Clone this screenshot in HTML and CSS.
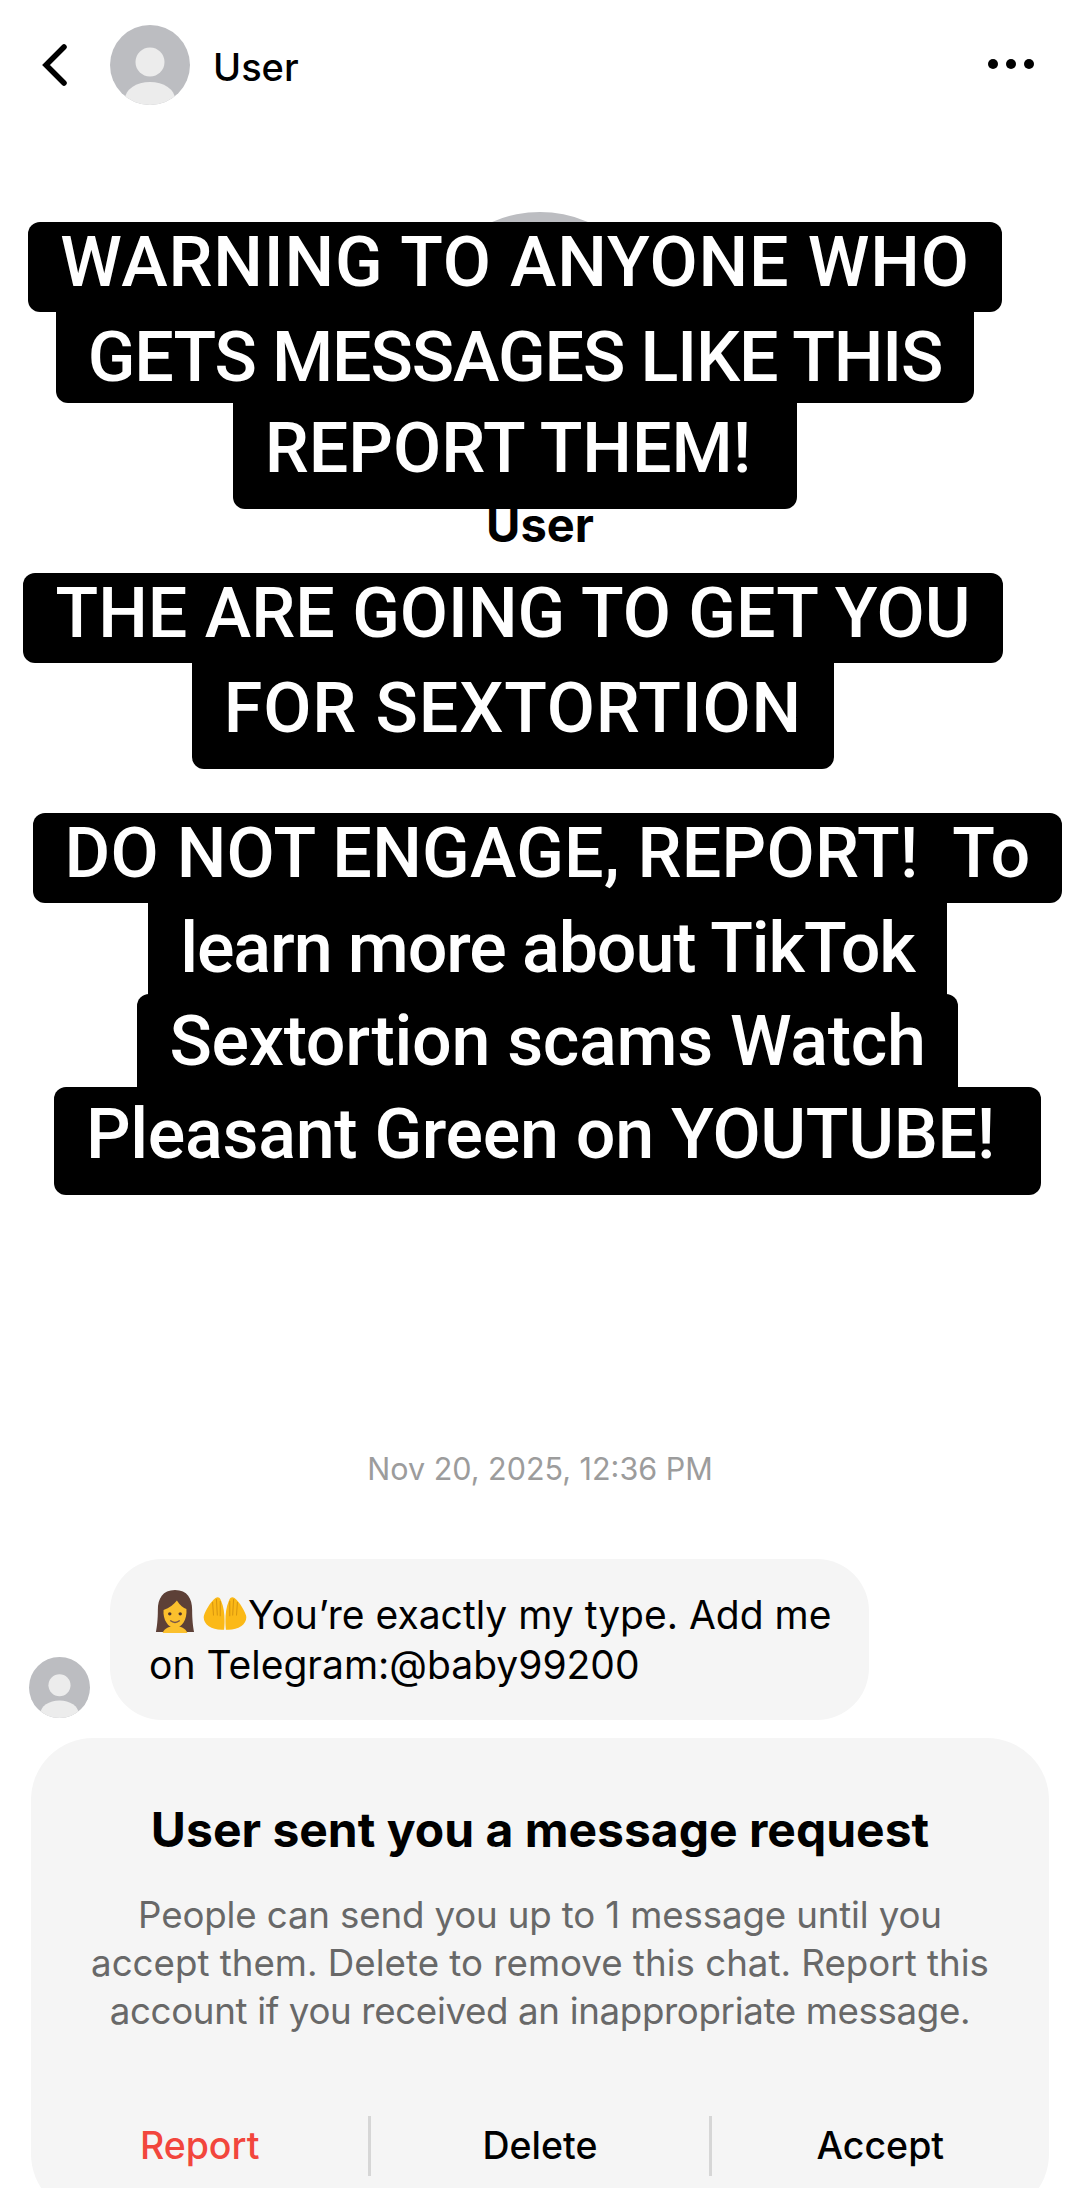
FILE: index.html
```html
<!DOCTYPE html>
<html lang="en">
  <head>
    <meta charset="UTF-8" />
    <meta name="viewport" content="width=device-width, initial-scale=1.0" />
    <title>Message request</title>
    <link rel="stylesheet" href="styles.css">
  </head>
  <body>
    <div class="page">
      <div class="topBar">
        <svg class="backIcon" viewBox="0 0 26 42" aria-hidden="true">
          <path d="M22 3 L4 21 L22 39" />
        </svg>
        <svg class="avatar avatarTop" viewBox="0 0 80 80" aria-hidden="true">
          <use href="#userPic" />
        </svg>
        <span class="topName">User</span>
        <div class="dots"><i></i><i></i><i></i></div>
      </div>

      <div class="profile">
        <svg class="avatar avatarBig" viewBox="0 0 80 80" aria-hidden="true">
          <use href="#userPic" />
        </svg>
        <div class="profileName">User</div>
      </div>

      <div class="chatDate">Nov 20, 2025, 12:36 PM</div>

      <div class="msgRow">
        <svg class="avatar avatarSmall" viewBox="0 0 80 80" aria-hidden="true">
          <use href="#userPic" />
        </svg>
        <div class="bubble">
          <p>
            <svg class="emoji" viewBox="0 0 42 46" aria-hidden="true">
              <path fill="#5d4037" d="M21 1 C8 1 3 10 3 22 C3 32 2 40 1 45 L41 45 C40 40 39 32 39 22 C39 10 34 1 21 1 Z" />
              <path fill="#fbc02d" d="M9 22 C15 20 20 16 23 12 C26 17 30 20 33 21 C34 32 28 41 21 41 C14 41 8 32 9 22 Z" />
              <path fill="#fbc02d" d="M8 46 C10 41 15 39 21 39 C27 39 32 41 34 46 Z" />
              <circle cx="15.5" cy="26" r="1.8" fill="#4e342e" />
              <circle cx="26.5" cy="26" r="1.8" fill="#4e342e" />
              <path d="M16 33 Q21 37 26 33" fill="none" stroke="#795548" stroke-width="1.5" />
            </svg><svg class="emoji emojiHands" viewBox="0 0 46 36" aria-hidden="true">
              <path fill="#fbb917" d="M15 1 C10 2 3 14 1 20 C-1 29 9 36 22 35 C23 27 23 14 19 5 C18 2 17 1 15 1 Z" />
              <path fill="#fbb917" d="M31 1 C36 2 43 14 45 20 C47 29 37 36 24 35 C23 27 23 14 27 5 C28 2 29 1 31 1 Z" />
              <path fill="none" stroke="#d8960f" stroke-width="1.1" d="M10 6 L11 20 M14 3 L15 20 M18 5 L18 21 M36 6 L35 20 M32 3 L31 20 M28 5 L28 21" />
            </svg>You’re exactly my type. Add me
          </p>
          <p>on Telegram:@baby99200</p>
        </div>
      </div>

      <div class="requestCard">
        <h2>User sent you a message request</h2>
        <p class="tightLine">People can send you up to 1 message until you</p>
        <p>accept them. Delete to remove this chat. Report this</p>
        <p class="tighterLine">account if you received an inappropriate message.</p>
        <div class="cardActions">
          <span class="reportBtn">Report</span>
          <span>Delete</span>
          <span>Accept</span>
        </div>
      </div>

      <!-- captions stuck on top of the screenshot -->
      <div class="caption captionOne">
        <span class="wide">WARNING TO ANYONE WHO</span>
        <span class="narrow">GETS MESSAGES LIKE THIS</span>
        <span class="tall tail">REPORT THEM!</span>
      </div>
      <div class="caption captionTwo">
        <span>THE ARE GOING TO GET YOU</span>
        <span class="tall wide">FOR SEXTORTION</span>
      </div>
      <div class="caption captionThree">
        <span class="loose">DO NOT ENGAGE, REPORT!&nbsp; To</span>
        <span class="narrow under">learn more about TikTok</span>
        <span class="snug under over">Sextortion scams Watch</span>
        <span class="tall tail snug over">Pleasant Green on YOUTUBE!</span>
      </div>
    </div>

    <svg class="defs" aria-hidden="true">
      <defs>
        <clipPath id="picClip"><circle cx="40" cy="40" r="40" /></clipPath>
        <g id="userPic" clip-path="url(#picClip)">
          <rect width="80" height="80" fill="#bcbdc1" />
          <circle cx="40" cy="37" r="14.5" fill="#ececec" />
          <ellipse cx="40" cy="74" rx="25" ry="17" fill="#ececec" />
        </g>
      </defs>
    </svg>
  </body>
</html>
```

FILE: styles.css
```css
html, body {
  margin: 0;
  padding: 0;
  background: #fff;
}
.page {
  position: relative;
  width: 1080px;
  height: 2188px;
  overflow: hidden;
  font-family: "Inter", "Liberation Sans", sans-serif;
  color: #000;
}
.defs {
  position: absolute;
  width: 0;
  height: 0;
}
.avatar {
  display: block;
  flex-shrink: 0;
}

/* top bar */
.topBar {
  display: flex;
  align-items: center;
  height: 80px;
  padding: 25px 46px 0 42px;
}
.backIcon {
  width: 26px;
  height: 42px;
  margin-right: 42px;
  margin-top: -1px;
}
.backIcon path {
  fill: none;
  stroke: #000;
  stroke-width: 5.5;
  stroke-linecap: round;
  stroke-linejoin: miter;
}
.avatarTop {
  width: 80px;
  height: 80px;
}
.topName {
  margin: 4px 0 0 23px;
  font-size: 38px;
  font-weight: 500;
}
.dots {
  display: flex;
  gap: 8px;
  margin-left: auto;
  margin-top: -2px;
}
.dots i {
  display: block;
  width: 10px;
  height: 10px;
  border-radius: 50%;
  background: #000;
}

/* profile block, mostly covered by the captions */
.profile {
  display: flex;
  flex-direction: column;
  align-items: center;
  margin-top: 107px;
}
.avatarBig {
  width: 240px;
  height: 240px;
}
.profileName {
  margin-top: 48px;
  font-size: 47px;
  line-height: 50px;
  font-weight: 700;
}

.chatDate {
  margin-top: 901px;
  text-align: center;
  font-size: 30.5px;
  line-height: 36px;
  color: #9c9c9c;
}

/* message */
.msgRow {
  display: flex;
  align-items: flex-end;
  margin-top: 72px;
  padding-left: 29px;
}
.avatarSmall {
  width: 61px;
  height: 61px;
  margin-bottom: 2px;
}
.bubble {
  width: 759px;
  height: 161px;
  box-sizing: border-box;
  margin-left: 20px;
  padding: 30px 0 0 39px;
  background: #f5f5f5;
  border-radius: 52px;
}
.bubble p {
  display: flex;
  align-items: center;
  height: 50px;
  margin: 0;
  font-size: 39px;
  white-space: nowrap;
}
.emoji {
  width: 40px;
  height: 44px;
  margin: -6px 6px 0 6px;
}
.emojiHands {
  width: 44px;
  height: 35px;
  margin: -2px 1px 0 2px;
}

/* request card */
.requestCard {
  width: 1018px;
  height: 478px;
  box-sizing: border-box;
  margin: 18px 0 0 31px;
  padding-top: 64px;
  background: #f5f5f5;
  border-radius: 62px;
  text-align: center;
}
.requestCard h2 {
  margin: 0 0 33px;
  font-size: 48px;
  line-height: 56px;
  font-weight: 700;
}
.requestCard p {
  margin: 0;
  font-size: 36.7px;
  line-height: 48px;
  color: #686868;
  white-space: nowrap;
}
.requestCard p.tightLine {
  letter-spacing: -0.15px;
}
.requestCard p.tighterLine {
  letter-spacing: -0.35px;
}
.cardActions {
  display: flex;
  margin-top: 81px;
  height: 60px;
  align-items: center;
  font-size: 37.5px;
  font-weight: 500;
}
.cardActions span {
  flex: 1;
  height: 60px;
  line-height: 60px;
  border-left: 3px solid #d6d6d6;
}
.cardActions span:first-child {
  border-left: 0;
}
.cardActions .reportBtn {
  color: #f2463d;
}

/* caption stickers */
.caption {
  position: absolute;
  left: 0;
  display: flex;
  flex-direction: column;
  align-items: center;
  font-family: "Roboto", "Liberation Sans", sans-serif;
  font-weight: 500;
  font-size: 70px;
  line-height: 80px;
  color: #fff;
  white-space: pre;
}
.caption span {
  display: block;
  padding: 0 32px 10px;
  background: #000;
  border-radius: 12px;
}
/* rows overlap so the inner corners of the narrower one stay hidden */
.caption span + span {
  margin-top: -12px;
  padding-top: 17px;
  padding-bottom: 6px;
}
.caption span.over {
  margin-top: 0;
  padding-top: 7px;
}
.caption span.under {
  margin-bottom: -12px;
  padding-bottom: 18px;
}
.caption span.tall {
  padding-bottom: 21px;
}
.caption span.tail {
  padding-right: 46px;
}
.caption .wide {
  letter-spacing: 0.85px;
}
.caption .loose {
  letter-spacing: 0.25px;
}
.caption .snug {
  letter-spacing: -0.3px;
}
.caption .narrow {
  letter-spacing: -1.1px;
}
.captionOne {
  top: 222px;
  width: 1030px;
}
.captionTwo {
  top: 573px;
  width: 1026px;
}
.captionThree {
  top: 813px;
  width: 1095px;
}
```
